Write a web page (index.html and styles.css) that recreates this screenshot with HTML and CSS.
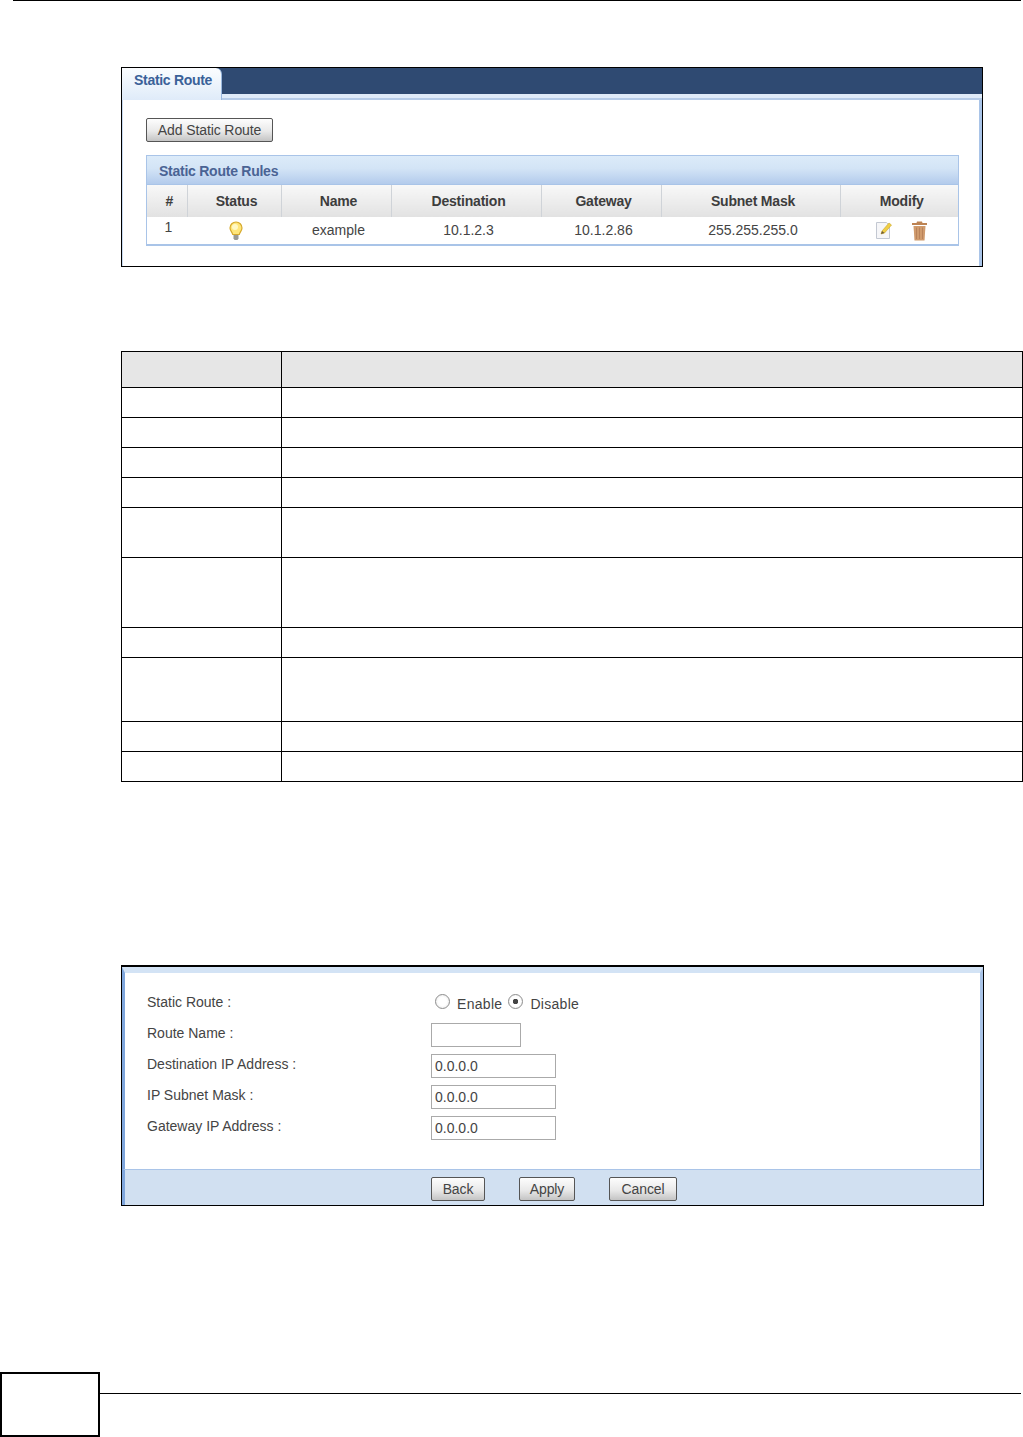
FILE: index.html
```html
<!DOCTYPE html>
<html lang="en">
<head>
    <meta charset="UTF-8">
    <title>Static Route</title>
    <link rel="stylesheet" href="styles.css">
</head>
<body>
    <div class="page">
        <div class="top-rule"></div>

        <!-- static route list -->
        <div class="shot shot-list">
            <div class="tab-bar">
                <div class="tab">Static Route</div>
            </div>
            <div class="tab-strip"></div>
            <div class="shot-body">
                <button class="btn btn-add">Add Static Route</button>
                <div class="rules">
                    <div class="rules-title">Static Route Rules</div>
                    <table class="rules-table">
                        <colgroup>
                            <col class="col-num"><col class="col-status"><col class="col-name"><col class="col-dest"><col class="col-gw"><col class="col-mask"><col class="col-mod">
                        </colgroup>
                        <thead>
                            <tr>
                                <th>#</th>
                                <th>Status</th>
                                <th>Name</th>
                                <th>Destination</th>
                                <th>Gateway</th>
                                <th>Subnet Mask</th>
                                <th>Modify</th>
                            </tr>
                        </thead>
                        <tbody>
                            <tr>
                                <td class="cell-num">1</td>
                                <td class="cell-status">
                                    <svg class="icon" width="16" height="20" viewBox="0 0 16 20">
                                        <path d="M8 1a6 6 0 0 0-6 6c0 2.600 2.200 4 2.700 6.500h6.600C11.800 11 14 9.600 14 7a6 6 0 0 0-6-6z" fill="#ffe67a" stroke="#d6a92c" stroke-width="1.200"/>
                                        <ellipse cx="7" cy="6" rx="3" ry="3" fill="#fff8c4"/>
                                        <path d="M5.500 14h5v3.200l-1 1.800h-3l-1-1.800z" fill="#9a9a94"/>
                                    </svg>
                                </td>
                                <td>example</td>
                                <td>10.1.2.3</td>
                                <td>10.1.2.86</td>
                                <td>255.255.255.0</td>
                                <td class="cell-mod">
                                    <svg class="icon" width="18" height="19" viewBox="0 0 18 19">
                                        <path d="M1.500 1.500h10l3 3v13h-13z" fill="#f6f6f8" stroke="#c3c8d2"/>
                                        <path d="M6 13l1-3 7-8 2.500 2-7 8z" fill="#f0cf45" stroke="#c9a227" stroke-width=".6"/>
                                        <path d="M6 13l1-3 2.500 2z" fill="#6b5a3a"/>
                                    </svg>
                                    <svg class="icon" width="17" height="20" viewBox="0 0 17 20">
                                        <path d="M6 .500h5l.5 1.500H16v2H1V2h4.500z" fill="#bd8353"/>
                                        <path d="M2.500 5h12l-1 14.500h-10z" fill="#d09b6d"/>
                                        <path d="M5.500 6.500v11.500M8.500 6.500v11.500M11.500 6.500v11.500" stroke="#b9825a" stroke-width="1"/>
                                    </svg>
                                </td>
                            </tr>
                        </tbody>
                    </table>
                </div>
            </div>
        </div>

        <!-- field description table, text left empty as in the page -->
        <table class="desc-table">
            <tr class="row-head"><td></td><td></td></tr>
            <tr class="row-30"><td></td><td></td></tr>
            <tr class="row-30"><td></td><td></td></tr>
            <tr class="row-30"><td></td><td></td></tr>
            <tr class="row-30"><td></td><td></td></tr>
            <tr class="row-50"><td></td><td></td></tr>
            <tr class="row-70"><td></td><td></td></tr>
            <tr class="row-30"><td></td><td></td></tr>
            <tr class="row-64"><td></td><td></td></tr>
            <tr class="row-30"><td></td><td></td></tr>
            <tr class="row-30"><td></td><td></td></tr>
        </table>

        <!-- static route edit form -->
        <div class="shot shot-form">
            <div class="form-body">
                <div class="form-row form-row-radio">
                    <label class="form-label">Static Route :</label>
                    <div class="radio-group">
                        <input type="radio" name="state" class="radio">
                        <span>Enable</span>
                        <input type="radio" name="state" class="radio" checked>
                        <span>Disable</span>
                    </div>
                </div>
                <div class="form-row">
                    <label class="form-label">Route Name :</label>
                    <input type="text" class="field field-short">
                </div>
                <div class="form-row">
                    <label class="form-label">Destination IP Address :</label>
                    <input type="text" class="field" value="0.0.0.0">
                </div>
                <div class="form-row">
                    <label class="form-label">IP Subnet Mask :</label>
                    <input type="text" class="field" value="0.0.0.0">
                </div>
                <div class="form-row">
                    <label class="form-label">Gateway IP Address :</label>
                    <input type="text" class="field" value="0.0.0.0">
                </div>
            </div>
            <div class="form-actions">
                <button class="btn btn-back">Back</button>
                <button class="btn btn-apply">Apply</button>
                <button class="btn btn-cancel">Cancel</button>
            </div>
        </div>

        <div class="page-footer">
            <div class="page-num"></div>
            <div class="footer-line"></div>
        </div>
    </div>
</body>
</html>
```

FILE: styles.css
```css
* {
    margin: 0;
    padding: 0;
    box-sizing: border-box;
}

body {
    font-family: "Liberation Sans", Arial, sans-serif;
    font-size: 14px;
    color: #444;
    background: #fff;
}

.page {
    height: 1437px;
    display: flex;
    flex-direction: column;
    overflow: hidden;
}

.top-rule {
    height: 1px;
    margin: 0 2px 0 13px;
    flex-shrink: 0;
    background: #000;
}

.shot {
    margin-left: 121px;
    border: 1px solid #000;
    background: #fff;
}

/* list screenshot */
.shot-list {
    width: 862px;
    height: 200px;
    margin-top: 66px;
    display: flex;
    flex-direction: column;
}

.tab-bar {
    height: 26px;
    background: #2f4a72;
    flex-shrink: 0;
}

.tab {
    width: 100px;
    height: 32px;
    position: relative;
    padding: 4px 0 0 12px;
    font-size: 14px;
    font-weight: bold;
    letter-spacing: -0.3px;
    color: #3a6199;
    background: linear-gradient(#fbfdff, #dfebf9);
    border-top-right-radius: 6px;
    border-right: 1px solid #9ab8de;
}

.tab-strip {
    height: 6px;
    flex-shrink: 0;
    background: #dfebf9;
    border-bottom: 2px solid #b5cbe8;
}

.shot-body {
    flex: 1;
    padding: 18px 24px 0 23px;
    border-left: 1px solid #c9daf0;
    border-right: 3px solid #a9c4e8;
}

.btn {
    font-family: inherit;
    font-size: 14px;
    color: #444;
    height: 24px;
    border: 1px solid #555;
    border-radius: 2px;
    background: linear-gradient(#fdfdfd, #e9e9e9 55%, #c4c4c4);
    letter-spacing: -0.1px;
    display: block;
}

.btn-add {
    width: 127px;
}

.rules {
    margin-top: 13px;
    width: 813px;
    border: 1px solid #a9c4e8;
    border-bottom-width: 2px;
}

.rules-title {
    height: 29px;
    padding: 7px 0 0 12px;
    font-weight: bold;
    letter-spacing: -0.25px;
    color: #4a6394;
    background: linear-gradient(#dcebf9, #d3e4f6 45%, #b3cbec);
    border-bottom: 1px solid #a9c4e8;
}

.rules-table {
    width: 100%;
    table-layout: fixed;
    border-collapse: collapse;
}

.col-num { width: 40px; }
.col-status { width: 94px; }
.col-name { width: 110px; }
.col-dest { width: 150px; }
.col-gw { width: 120px; }
.col-mask { width: 179px; }

.rules-table th {
    height: 32px;
    padding-left: 5px;
    font-weight: bold;
    letter-spacing: -0.2px;
    color: #3d3d3d;
    background: linear-gradient(#f8f8f8, #e2e2e2);
    border-left: 1px solid #cfd3d8;
}

.rules-table th:first-child {
    border-left: 0;
}

.rules-table td {
    height: 27px;
    padding: 0 0 2px 5px;
    text-align: center;
    color: #444;
}

.rules-table .cell-num {
    vertical-align: top;
    padding: 2px 0 0 3px;
}

.rules-table .cell-status {
    padding: 0 0 0 3px;
}

.icon {
    display: inline-block;
    vertical-align: middle;
}

.rules-table .cell-mod {
    padding: 0 0 0 5px;
}

.cell-mod .icon + .icon {
    margin-left: 14px;
}

/* description table */
.desc-table {
    margin: 84px 0 0 121px;
    width: 902px;
    border-collapse: collapse;
    table-layout: fixed;
    flex-shrink: 0;
}

.desc-table td {
    border: 1px solid #000;
}

.desc-table td:first-child {
    width: 160px;
}

.row-head { height: 36px; background: #e6e6e6; }
.row-30 { height: 30px; }
.row-50 { height: 50px; }
.row-70 { height: 70px; }
.row-64 { height: 64px; }

/* form screenshot */
.shot-form {
    width: 863px;
    height: 241px;
    margin-top: 183px;
    display: flex;
    flex-direction: column;
    border-top-width: 2px;
}

.form-body {
    flex: 1;
    padding: 20px 0 0 22px;
    border-top: 6px solid #d3e3f5;
    border-left: 3px solid #7fa6dc;
    border-right: 3px solid #a9c4e8;
}

.form-row {
    display: grid;
    grid-template-columns: 284px auto;
    justify-content: start;
    align-items: center;
    height: 24px;
    margin-bottom: 7px;
}

.form-label {
    position: relative;
    top: -2px;
}

.form-row-radio {
    margin-top: -1px;
}

.radio-group {
    display: flex;
    align-items: center;
    gap: 6px;
    padding-left: 4px;
    position: relative;
    top: -3px;
}

.radio-group span {
    position: relative;
    top: 3px;
    margin-left: 1px;
    letter-spacing: 0.3px;
}

.radio {
    appearance: none;
    width: 15px;
    height: 15px;
    border: 1px solid #8e8e8e;
    border-radius: 50%;
    background: radial-gradient(circle, #fff 45%, #e2e2e2);
}

.radio:checked {
    background: radial-gradient(circle, #444 0 2.500px, #fff 3px 5px, #e2e2e2);
}

.field {
    display: block;
    width: 125px;
    height: 24px;
    padding: 0 3px;
    font-family: inherit;
    font-size: 14px;
    color: #444;
    border: 1px solid #aaa;
    outline: 0;
}

.field-short {
    width: 90px;
}

.form-actions {
    height: 36px;
    flex-shrink: 0;
    display: flex;
    align-items: center;
    padding: 2px 0 0 306px;
    background: #d1e0f1;
    border-top: 1px solid #a9c4e8;
    border-left: 3px solid #7fa6dc;
    border-right: 1px solid #a9c4e8;
}

.btn-back { width: 54px; }
.btn-apply { width: 56px; margin-left: 34px; }
.btn-cancel { width: 68px; margin-left: 34px; }

/* page footer */
.page-footer {
    margin-top: auto;
    display: flex;
    height: 65px;
    flex-shrink: 0;
}

.page-num {
    width: 100px;
    border: 2px solid #000;
}

.footer-line {
    flex: 1;
    height: 1px;
    margin: 21px 2px 0 0;
    background: #000;
}
```
